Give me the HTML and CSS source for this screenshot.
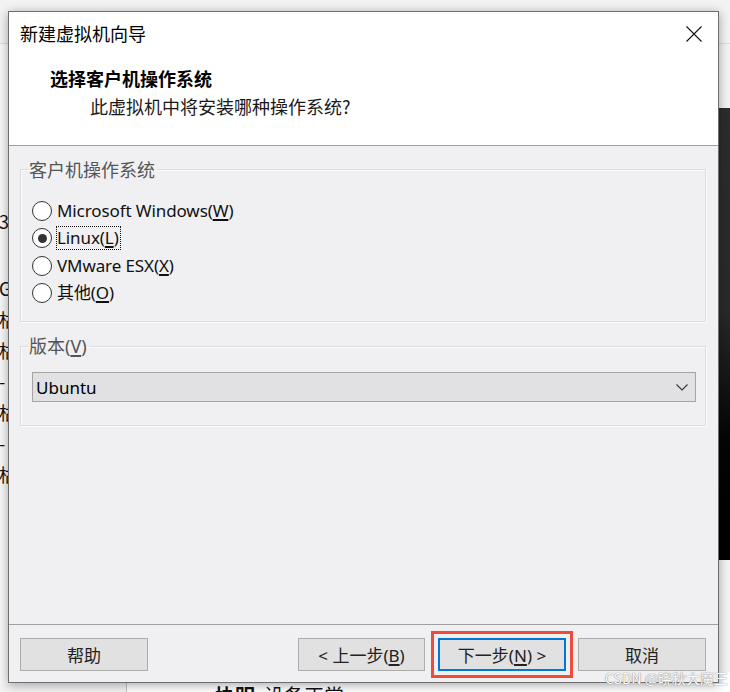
FILE: index.html
```html
<!DOCTYPE html>
<html lang="zh-CN">
<head>
<meta charset="utf-8">
<title>新建虚拟机向导</title>
<link rel="stylesheet" href="styles.css">
</head>
<body>
<div class="desktop">
  <div class="topbar"></div>
  <div class="bg-left">
    <div class="bg-line l1">3</div>
    <div class="bg-line l2">Gi</div>
    <div class="bg-line l3">枯</div>
    <div class="bg-line l3">枯</div>
    <div class="bg-line l3">-</div>
    <div class="bg-line l3">枯</div>
    <div class="bg-line l3">-</div>
    <div class="bg-line l3">枯</div>
  </div>
  <div class="bg-right"></div>
  <div class="bg-bottom"><span class="bg-bold">协明</span>&nbsp;&nbsp;设备正常</div>

  <div class="dialog">
    <div class="header">
      <div class="titlebar">
        <span class="title">新建虚拟机向导</span>
        <svg class="close" width="16" height="16" viewBox="0 0 16 16"><path d="M0.5 0.5 L15.5 15.5 M15.5 0.5 L0.5 15.5" stroke="#111" stroke-width="1.1" fill="none"/></svg>
      </div>
      <div class="heading">选择客户机操作系统</div>
      <div class="subheading">此虚拟机中将安装哪种操作系统?</div>
    </div>

    <div class="body">
      <fieldset class="group group-os">
        <legend>客户机操作系统</legend>
        <div class="radio-row"><span class="radio"></span><span class="rlabel">Microsoft Windows(<u>W</u>)</span></div>
        <div class="radio-row"><span class="radio checked"></span><span class="rlabel focus">Linux(<u>L</u>)</span></div>
        <div class="radio-row"><span class="radio"></span><span class="rlabel">VMware ESX(<u>X</u>)</span></div>
        <div class="radio-row"><span class="radio"></span><span class="rlabel">其他(<u>O</u>)</span></div>
      </fieldset>

      <fieldset class="group group-ver">
        <legend>版本(<u>V</u>)</legend>
        <div class="select">
          <span>Ubuntu</span>
          <svg class="chev" width="12" height="7" viewBox="0 0 12 7"><path d="M0.5 0.5 L6 6 L11.5 0.5" stroke="#333" stroke-width="1.1" fill="none"/></svg>
        </div>
      </fieldset>
    </div>

    <div class="footer">
      <button class="btn">帮助</button>
      <button class="btn btn-prev">&lt; 上一步(<u>B</u>)</button>
      <button class="btn btn-next">下一步(<u>N</u>) &gt;</button>
      <button class="btn">取消</button>
    </div>
  </div>

  <div class="watermark">CSDN @晓秋大魔王</div>
</div>
</body>
</html>
```

FILE: styles.css
```css
* { box-sizing: border-box; }
html, body { margin: 0; padding: 0; }
body {
  width: 730px;
  height: 692px;
  overflow: hidden;
  background: #f3f3f3;
  font-family: "Noto Sans", "Noto Sans CJK SC", sans-serif;
  color: #111;
}
.desktop {
  position: relative;
  width: 730px;
  height: 692px;
  overflow: hidden;
}
.topbar {
  position: absolute;
  left: 0; top: 0;
  width: 730px; height: 44px;
  border-bottom: 1px solid #dcdcdc;
  background: #f3f3f3;
}
.bg-left {
  position: absolute;
  left: -1px; top: 44px;
  width: 130px; height: 640px;
  background: #f8f8f8;
  font-family: "Noto Sans CJK SC", sans-serif;
  font-size: 18px;
  color: #111;
  display: flex;
  flex-direction: column;
}
.bg-line { height: 31px; line-height: 31px; }
.l1 { margin-top: 162px; }
.l2 { margin-top: 36px; }
.bg-right {
  position: absolute;
  left: 719px; top: 108px;
  width: 20px; height: 452px;
  background: linear-gradient(#2d2d2d 0, #2a2a2a 200px, #050505 330px, #000 100%);
}
.bg-bottom {
  position: absolute;
  left: 126px; top: 672px;
  width: 604px; height: 40px;
  background: #fff;
  border-left: 1px solid #c4c4c4;
  padding: 12px 0 0 88px;
  font-family: "Noto Sans CJK SC", sans-serif;
  font-size: 20px;
  line-height: 24px;
  color: #111;
}
.bg-bold { font-weight: 700; }

.dialog {
  position: absolute;
  left: 8px; top: 11px;
  width: 711px; height: 672px;
  border: 1px solid #6e6e6e;
  background: #f0eff2;
  box-shadow: 0 2px 10px rgba(0,0,0,0.35);
  display: flex;
  flex-direction: column;
}
.header {
  background: #fff;
  height: 134px;
  border-bottom: 1px solid #a0a0a0;
  font-family: "Noto Sans CJK SC", sans-serif;
  font-size: 18px;
  color: #000;
}
.titlebar {
  height: 42px;
  display: flex;
  align-items: center;
  justify-content: space-between;
  padding: 0 16px 0 11px;
}
.title { line-height: 24px; }
.close { display: block; margin-top: 1px; }
.heading {
  margin-top: 12px;
  padding-left: 41px;
  font-weight: 700;
  line-height: 24px;
}
.subheading {
  margin-top: 4px;
  padding-left: 81px;
  line-height: 24px;
  color: #1a1a1a;
}

.body {
  flex: 1;
  padding: 0 12px 0 11px;
  font-size: 17px;
}
.group {
  margin: 0;
  border: 1px solid #dcdbde;
  box-shadow: inset 1px 1px 0 #fbfbfc, 1px 1px 0 #fbfbfc;
  min-width: 0;
}
.group legend {
  margin-left: -3px;
  padding: 0 2px 0 0;
  font-family: "Noto Sans CJK SC", sans-serif;
  font-size: 18px;
  line-height: 24px;
  color: #555;
}
.group-ver legend { font-family: "Noto Sans", "Noto Sans CJK SC", sans-serif; }
.group-os {
  margin-top: 11px;
  padding: 16px 11px 14px 11px;
}
.radio-row {
  height: 27.5px;
  display: flex;
  align-items: center;
}
.radio {
  width: 20px; height: 20px;
  border: 1.5px solid #333;
  border-radius: 50%;
  background: #fff;
  display: flex;
  align-items: center;
  justify-content: center;
  flex: none;
}
.radio.checked::after {
  content: "";
  width: 9px; height: 9px;
  border-radius: 50%;
  background: #333;
}
.rlabel {
  margin-left: 4px;
  line-height: 22px;
  padding: 0 1px 0 0;
  border: 1px solid transparent;
  color: #111;
  letter-spacing: -0.1px;
}
.rlabel.focus { border: 1px dotted #111; }
u { text-decoration-thickness: 1.5px; text-underline-offset: 2px; }

.group-ver {
  margin-top: 12px;
  padding: 14px 9px 23px 11px;
}
.select {
  height: 30px;
  border: 1px solid #a5a5a5;
  background: #e1e0e3;
  display: flex;
  align-items: center;
  justify-content: space-between;
  padding: 0 7px 0 3px;
  color: #000;
}
.chev { display: block; }

.footer {
  height: 58px;
  border-top: 1px solid #a0a0a0;
  display: flex;
  align-items: flex-start;
  padding: 13px 12px 0 11px;
}
.btn {
  height: 33px;
  width: 128px;
  border: 1px solid #adadad;
  background: #e1e1e1;
  font-family: "Noto Sans", "Noto Sans CJK SC", sans-serif;
  font-size: 17px;
  color: #222;
  padding: 0;
  margin: 0;
}
.btn-prev { margin-left: auto; width: 127px; }
.btn-next {
  margin-left: 13px;
  margin-right: 12px;
  border: 2px solid #0078d7;
  outline: 3px solid #ee4b3a;
  outline-offset: 4px;
  border-radius: 0;
}

.watermark {
  position: absolute;
  left: 605px; top: 668px;
  font-family: "Noto Sans CJK SC", sans-serif;
  font-size: 14px;
  line-height: 20px;
  color: #fbfbfb;
  text-shadow: 0 0 1px #8a8a8a, 0 0 1px #8a8a8a;
}
```
